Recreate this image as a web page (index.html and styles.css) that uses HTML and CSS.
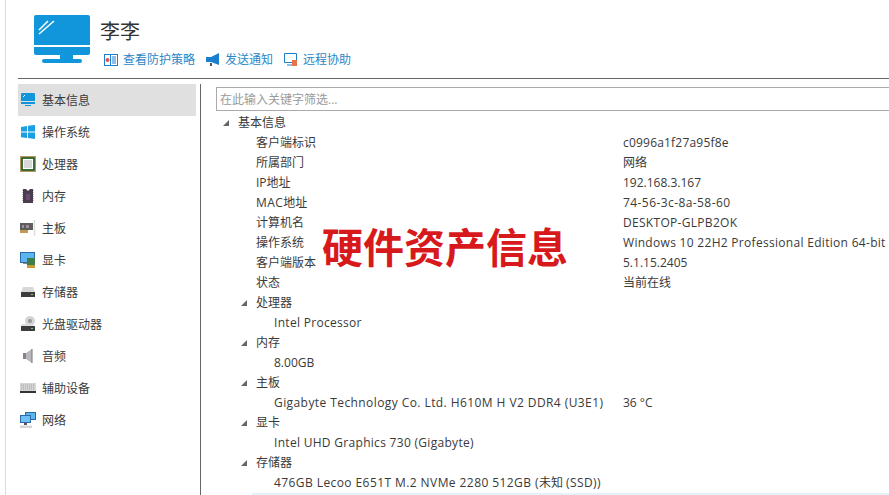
FILE: index.html
```html
<!DOCTYPE html>
<html lang="zh">
<head>
<meta charset="utf-8">
<title>硬件资产信息</title>
<link rel="stylesheet" href="styles.css">
</head>
<body>
<div class="window">
  <header class="head">
    <svg class="logo" width="58" height="50" viewBox="0 0 58 50">
      <path d="M2 0h52a2 2 0 0 1 2 2v28H0V2a2 2 0 0 1 2-2z" fill="#1296db"/>
      <path d="M0 32h56v6a2 2 0 0 1-2 2H2a2 2 0 0 1-2-2z" fill="#1296db"/>
      <path d="M26 40h13v4H26z" fill="#1296db"/>
      <rect x="8" y="44" width="40" height="4" rx="2" fill="#1296db"/>
      <path d="M5 15 14 6M5 19 20 6" stroke="#fff" stroke-width="1.5" fill="none"/>
    </svg>
    <div class="head-text">
      <h1 class="name">李李</h1>
      <nav class="actions">
        <a class="action">
          <svg width="14" height="12" viewBox="0 0 14 12"><rect width="14" height="12" fill="#1b7fd0"/><rect x="1" y="1" width="5" height="10" fill="#fff"/><circle cx="3.5" cy="6" r="2" fill="#d9534f"/><rect x="7" y="1" width="6" height="10" fill="#fff"/><path d="M8 3h4M8 5h4M8 7h4M8 9h4" stroke="#1b7fd0"/></svg>
          查看防护策略
        </a>
        <a class="action">
          <svg width="14" height="14" viewBox="0 0 14 14"><path d="M0 4h5l8-4v12L5 9H0z" fill="#1b7fd0"/><rect x="4" y="10" width="2" height="3" fill="#555"/></svg>
          发送通知
        </a>
        <a class="action">
          <svg width="14" height="14" viewBox="0 0 14 14"><path d="M.5.5h12v9H.5z" fill="#fff" stroke="#1b7fd0"/><path d="M3 12h5" stroke="#1b7fd0"/><rect x="8" y="7" width="5" height="6" fill="#e8734a"/></svg>
          远程协助
        </a>
      </nav>
    </div>
  </header>
  <div class="main">
    <ul class="side">
      <li class="item selected">
        <svg width="16" height="14" viewBox="0 0 16 14"><path d="M2 0h12a1 1 0 0 1 1 1v7H1V1a1 1 0 0 1 1-1z" fill="#1296db"/><path d="M1 9h14v2H1z" fill="#1296db"/><path d="M5 12h6v1H5z" fill="#1296db"/><path d="M3 4 5 2" stroke="#fff"/></svg>
        基本信息
      </li>
      <li class="item">
        <svg width="16" height="14" viewBox="0 0 16 14"><path d="M1 2 7 1v5.500H1zM8 .8 15 0v6.500H8zM1 7.500h6V13l-6-.8zM8 7.500h7V14l-7-1z" fill="#1aa0e0"/></svg>
        操作系统
      </li>
      <li class="item">
        <svg width="16" height="16" viewBox="0 0 16 16"><rect x=".5" y=".5" width="15" height="15" fill="#3f6a3a" stroke="#c47a22" stroke-dasharray="1 1"/><rect x="3.500" y="3.500" width="9" height="9" fill="#d8d8d8" stroke="#fff"/></svg>
        处理器
      </li>
      <li class="item">
        <svg width="16" height="16" viewBox="0 0 16 16"><path d="M3 1h3l2 2 2-2h3v14H3z" fill="#4a3d4e"/><path d="M2.500 2v12M13.500 2v12" stroke="#c8b8d0" stroke-dasharray="1 1"/><path d="M6 6h4v6H6z" fill="#6a4a70"/></svg>
        内存
      </li>
      <li class="item">
        <svg width="16" height="16" viewBox="0 0 16 16"><rect y="3" width="13" height="7" fill="#5a5f5a"/><rect y="10" width="8" height="3" fill="#c09a55"/><path d="M2 5h2v3H2zM6 5h3v3H6z" fill="#a88aa8"/><path d="M14.500 0v16" stroke="#ddd" stroke-width="1.500"/></svg>
        主板
      </li>
      <li class="item">
        <svg width="16" height="16" viewBox="0 0 16 16"><rect x=".5" y=".5" width="14" height="10" fill="#5db5ef" stroke="#2c6aa8"/><path d="M3 11h4v1H3z" fill="#888"/><rect x="7" y="6" width="8" height="7" fill="#3d7d4a"/><path d="M7 13h8v3H7z" fill="#c99a3a"/></svg>
        显卡
      </li>
      <li class="item">
        <svg width="16" height="12" viewBox="0 0 16 12"><path d="M3 1h10l2 5H1z" fill="#d8d8d8"/><rect x="1" y="6" width="14" height="5" fill="#3d3d3d"/><path d="M11 8.500h2" stroke="#7fbf7f"/></svg>
        存储器
      </li>
      <li class="item">
        <svg width="16" height="16" viewBox="0 0 16 16"><circle cx="10" cy="5" r="5" fill="#d4d4d4"/><circle cx="10" cy="5" r="2" fill="#999"/><path d="M2 8h9l3 2H1z" fill="#ddd"/><rect x="1" y="10" width="14" height="5" fill="#3d3d3d"/><path d="M11 12.500h2" stroke="#7fbf7f"/></svg>
        光盘驱动器
      </li>
      <li class="item">
        <svg width="16" height="16" viewBox="0 0 16 16"><path d="M3 5h3v6H3z" fill="#8d7f90"/><path d="M6 5l6-4v14l-6-4z" fill="#b9b9bd"/><path d="M12 1v14" stroke="#777"/></svg>
        音频
      </li>
      <li class="item">
        <svg width="16" height="10" viewBox="0 0 16 10"><rect width="16" height="8" fill="#d5d5d5"/><path d="M1 2h14M1 4h14M1 6h14" stroke="#999" stroke-dasharray="1 1" stroke-width=".8"/><rect y="8" width="16" height="2" fill="#333"/></svg>
        辅助设备
      </li>
      <li class="item">
        <svg width="16" height="16" viewBox="0 0 16 16"><rect x="5.500" y=".5" width="10" height="7" fill="#5db5ef" stroke="#2c6aa8"/><rect x=".5" y="3.500" width="10" height="7" fill="#6cc0f5" stroke="#2c6aa8"/><path d="M4 11h3v2H4z" fill="#555"/><path d="M0 13.500h12V16H0z" fill="#d5d5d5"/></svg>
        网络
      </li>
    </ul>
    <section class="content">
      <input class="filter" type="text" placeholder="在此输入关键字筛选...">
      <div class="tree">
        <div class="row group first"><i class="arrow"></i>基本信息</div>
        <div class="row prop"><span class="key">客户端标识</span><span class="sp1">c0996a1f27a95f8e</span></div>
        <div class="row prop"><span class="key">所属部门</span><span>网络</span></div>
        <div class="row prop"><span class="key">IP地址</span><span>192.168.3.167</span></div>
        <div class="row prop"><span class="key"><span class="sp3">MAC</span>地址</span><span class="sp3">74-56-3c-8a-58-60</span></div>
        <div class="row prop"><span class="key">计算机名</span><span class="sp2">DESKTOP-GLPB2OK</span></div>
        <div class="row prop"><span class="key">操作系统</span><span class="sp2">Windows 10 22H2 Professional Edition 64-bit</span></div>
        <div class="row prop"><span class="key">客户端版本</span><span>5.1.15.2405</span></div>
        <div class="row prop"><span class="key">状态</span><span>当前在线</span></div>
        <div class="row group"><i class="arrow"></i>处理器</div>
        <div class="row leaf"><span class="key sp2">Intel Processor</span></div>
        <div class="row group"><i class="arrow"></i>内存</div>
        <div class="row leaf"><span class="key">8.00GB</span></div>
        <div class="row group"><i class="arrow"></i>主板</div>
        <div class="row leaf"><span class="key sp3">Gigabyte Technology Co. Ltd. H610M H V2 DDR4 (U3E1)</span><span>36 °C</span></div>
        <div class="row group"><i class="arrow"></i>显卡</div>
        <div class="row leaf"><span class="key sp2">Intel UHD Graphics 730 (Gigabyte)</span></div>
        <div class="row group"><i class="arrow"></i>存储器</div>
        <div class="row leaf"><span class="key"><span class="sp3">476GB Lecoo E651T M.2 NVMe 2280 512GB (</span>未知 <span class="sp3">(SSD))</span></span></div>
        <div class="row hover"></div>
      </div>
      <div class="stamp">硬件资产信息</div>
    </section>
  </div>
</div>
</body>
</html>
```
FILE: styles.css
```css
* { box-sizing: border-box; }
html, body { margin: 0; height: 100%; overflow: hidden; background: #fff; }
body {
  font-family: "Open Sans", "Noto Sans CJK SC", sans-serif;
  font-size: 12px;
  color: #3a3a3a;
}
.window {
  height: 495px;
  margin-left: 5px;
  padding-left: 12px;
  border-left: 1px solid #dcdcdc;
  display: flex;
  flex-direction: column;
}
.head {
  height: 79px;
  flex: none;
  padding: 15px 0 0 16px;
  display: flex;
  border-bottom: 1px solid #666;
}
.logo { flex: none; }
.head-text { margin-left: 8px; padding-top: 4px; }
.name { margin: 0; font-size: 20px; font-weight: 400; line-height: 26px; color: #333; }
.actions { display: flex; gap: 11px; margin-top: 6px; padding-left: 4px; }
.action { display: flex; align-items: center; gap: 5px; color: #2b86c5; line-height: 18px; white-space: nowrap; }
.main { flex: 1; display: flex; min-height: 0; padding-top: 5px; }
.side { width: 183px; flex: none; margin: 0; padding: 0 4px 0 0; list-style: none; border-right: 1px solid #666; height: 411px; }
.item { height: 32px; display: flex; align-items: center; padding-left: 2px; gap: 6px; color: #3a3a3a; }
.item svg { width: 16px; flex: none; }
.selected { background: #e0e0e0; }
.content { flex: 1; min-width: 0; position: relative; padding: 3px 0 0 15px; }
.filter {
  display: block;
  width: 100%;
  height: 24px;
  border: 1px solid #aaa;
  border-right: 0;
  padding: 0 3px;
  font: inherit;
  outline: 0;
}
.filter::placeholder { color: #9a9a9a; opacity: 1; }
.tree { margin-top: 2px; }
.row { height: 20px; line-height: 20px; display: flex; white-space: nowrap; }
.group { padding-left: 25px; }
.first { padding-left: 7px; }
.arrow {
  width: 0;
  height: 0;
  align-self: center;
  margin-right: 9px;
  border-style: solid;
  border-width: 0 0 6px 6px;
  border-color: transparent transparent #666 transparent;
}
.prop { padding-left: 40px; }
.leaf { padding-left: 58px; }
.key { flex: none; }
.leaf .key { width: 349px; }
.prop .key { width: 367px; }
.sp1 { letter-spacing: .2px; }
.sp2 { letter-spacing: .3px; }
.sp3 { letter-spacing: .42px; }
.hover { margin-left: 36px; background: #e5f1fb; }
.stamp {
  position: absolute;
  left: 121px;
  top: 138px;
  font-family: "Noto Sans CJK SC", sans-serif;
  font-size: 41px;
  font-weight: 700;
  line-height: 46px;
  color: #d8191c;
  white-space: nowrap;
}
```
